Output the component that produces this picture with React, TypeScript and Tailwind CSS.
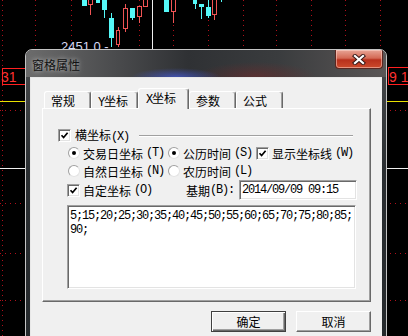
import React from 'react'

const mono = "font-['Liberation_Mono',monospace] tracking-[-1.2px]"

// ASCII runs in a narrow mono face, the rest in the CJK face
const Txt = ({ s }: { s: string }) => (
  <>
    {s
      .split(/([\x20-\x7e]+)/)
      .filter(Boolean)
      .map((p, i) =>
        /^[\x20-\x7e]+$/.test(p) ? (
          <span key={i} className={mono}>
            {p}
          </span>
        ) : (
          <span key={i}>{p}</span>
        )
      )}
  </>
)

const Check = () => (
  <span className="flex h-[13px] w-[13px] shrink-0 items-center justify-center border border-t-[#a0a0a0] border-l-[#a0a0a0] border-b-white border-r-white bg-white shadow-[inset_1px_1px_0_#696969,inset_-1px_-1px_0_#e3e3e3]">
    <svg width="9" height="9" viewBox="0 0 9 9">
      <path d="M1.5 4.2 L3.6 6.5 L7.6 1.8" fill="none" stroke="#000" strokeWidth="1.7" />
    </svg>
  </span>
)

const Radio = ({ on }: { on?: boolean }) => (
  <span className="flex h-[12px] w-[12px] shrink-0 items-center justify-center rounded-full border border-t-[#a0a0a0] border-l-[#a0a0a0] border-b-[#e3e3e3] border-r-[#e3e3e3] bg-white">
    {on && <span className="h-[4px] w-[4px] rounded-full bg-black" />}
  </span>
)

const candles = [
  { x: 82, w: 5, y: -1, h: 7, c: 'g' },
  { x: 88, w: 5, y: -1, h: 6, c: 'r', wt: 5, wb: 15 },
  { x: 96, w: 4, y: -1, h: 4, c: 'g' },
  { x: 102, w: 5, y: -1, h: 11, c: 'g', wt: 0, wb: 18 },
  { x: 109, w: 5, y: 18, h: 20, c: 'g', wt: 13, wb: 47 },
  { x: 116, w: 4, y: 30, h: 15, c: 'r', wt: 27, wb: 47 },
  { x: 123, w: 5, y: 8, h: 21, c: 'r', wt: 4, wb: 32 },
  { x: 130, w: 5, y: 8, h: 10, c: 'g', wt: 8, wb: 20 },
  { x: 137, w: 5, y: 6, h: 11, c: 'r', wt: 6, wb: 23 },
  { x: 143, w: 5, y: -1, h: 8, c: 'r' },
  { x: 164, w: 5, y: -1, h: 13, c: 'g' },
  { x: 171, w: 5, y: -1, h: 13, c: 'r', wt: 0, wb: 23 },
  { x: 193, w: 4, y: -1, h: 5, c: 'g', wt: 0, wb: 9 },
  { x: 199, w: 5, y: 4, h: 3, c: 'g', wt: 4, wb: 19 },
  { x: 206, w: 5, y: 7, h: 9, c: 'g', wt: 0, wb: 18 },
  { x: 212, w: 5, y: -1, h: 16, c: 'r', wt: 0, wb: 20 },
]

const Chart = () => (
  <svg className="absolute inset-0" width="408" height="336" viewBox="0 0 408 336">
    {[2, 35, 71, 139, 173, 208, 243, 276, 311, 345, 380].map((x) => (
      <line key={x} x1={x + 0.5} y1="0" x2={x + 0.5} y2="336" stroke="#b0101a" strokeDasharray="1 4" />
    ))}
    {[110, 203, 253, 300].map((y) => (
      <line key={y} x1="0" y1={y + 0.5} x2="408" y2={y + 0.5} stroke="#b0101a" strokeDasharray="1 4" />
    ))}
    <line x1="0" y1="101.5" x2="408" y2="101.5" stroke="#e8e000" />
    <line x1="0" y1="168.5" x2="408" y2="168.5" stroke="#f0f0f0" />
    <line x1="152.5" y1="0" x2="152.5" y2="49" stroke="#f0f0f0" />
    <rect x="2.5" y="68.5" width="30" height="16" fill="#000" stroke="#ff2020" />
    <text x="-3" y="82" fill="#ff3030" fontSize="14" fontFamily="Liberation Sans">
      .31
    </text>
    <rect x="388.5" y="67.5" width="40" height="17" fill="#000" stroke="#ff2020" />
    <text x="389" y="82" fill="#ff3030" fontSize="14" fontFamily="Liberation Sans">
      9 10
    </text>
    {candles.map((k, i) => {
      const cx = k.x + Math.floor(k.w / 2) + 0.5
      const col = k.c === 'g' ? '#55f8f8' : '#f05454'
      return (
        <g key={i}>
          {k.wt !== undefined && <line x1={cx} y1={k.wt} x2={cx} y2={k.wb} stroke={col} />}
          {k.c === 'g' ? (
            <rect x={k.x} y={k.y} width={k.w} height={k.h} fill={col} />
          ) : (
            <rect x={k.x + 0.5} y={k.y + 0.5} width={k.w - 1} height={k.h - 1} fill="#000" stroke={col} />
          )}
        </g>
      )
    })}
    <rect x="221" y="0" width="1" height="2" fill="#55f8f8" />
    <text x="61" y="51" fill="#d6d8f4" fontSize="13" fontFamily="Liberation Sans">
      2451.0 -
    </text>
  </svg>
)

const tabs = [
  { t: '常规', w: 'w-[47px]' },
  { t: 'Y坐标', w: 'w-[47px]' },
  { t: 'X坐标', w: 'w-[51px]', on: true },
  { t: '参数', w: 'w-[47px]' },
  { t: '公式', w: 'w-[47px]' },
]

export default function App() {
  return (
    <div className="relative h-[336px] w-[408px] overflow-hidden bg-black font-['Noto_Sans_CJK_SC',sans-serif] text-[12px] leading-[13px] text-black">
      <Chart />

      <div className="absolute left-[25px] top-[49px] flex h-[300px] w-[362px] flex-col overflow-hidden rounded-t-[7px] border border-[#c4c4c4] bg-[linear-gradient(180deg,#4a4c4e,#2a2e31_40%,#25292c)] px-[4px]">
        {/* title bar */}
        <div className="-mx-[4px] flex h-[27px] shrink-0 items-start justify-between bg-[radial-gradient(ellipse_45px_9px_at_150px_27px,rgba(70,90,210,0.75),transparent),radial-gradient(ellipse_60px_14px_at_230px_26px,rgba(120,40,40,0.5),transparent),linear-gradient(90deg,#6c6c6c,#4a4b4d_25%,#2f3134_45%,#3a3c3e_70%,#5a5656_100%)]">
          <span className="ml-[6px] mt-[8px] text-[12px] leading-[13px] text-[#111] [text-shadow:0_0_5px_rgba(255,255,255,0.7)]">
            窗格属性
          </span>
          <span className="mr-[3px] flex h-[19px] w-[48px] items-center justify-center rounded-b-[4px] border border-t-0 border-[#5a2620] bg-[linear-gradient(180deg,#e8a596,#d46a55_45%,#b8301c_55%,#cc4a2c)] shadow-[inset_0_0_0_1px_rgba(255,220,210,0.5)]">
            <svg width="14" height="11" viewBox="0 0 14 11">
              <path d="M3 2 L11 9 M11 2 L3 9" stroke="#3a1a18" strokeWidth="4.2" strokeLinecap="square" />
              <path d="M3 2 L11 9 M11 2 L3 9" stroke="#fff" strokeWidth="2.2" strokeLinecap="square" />
            </svg>
          </span>
        </div>

        {/* client area */}
        <div className="flex flex-1 flex-col border-l border-t border-[#e8e8e8] bg-[#f0f0f0]">
          <div className="ml-[13px] mt-[10px] flex h-[20px] items-end">
            {tabs.map((tb) =>
              tb.on ? (
                <div
                  key={tb.t}
                  className={`relative z-10 -mb-px h-[21px] ${tb.w} rounded-t-[3px] border-l border-t border-r border-l-white border-t-white border-r-[#696969] bg-[#f0f0f0] pl-[7px] pt-[2px] shadow-[inset_-1px_0_0_#a0a0a0]`}
                >
                  <Txt s={tb.t} />
                </div>
              ) : (
                <div
                  key={tb.t}
                  className={`h-[17px] ${tb.w} rounded-t-[3px] border-l border-t border-r border-l-white border-t-white border-r-[#696969] pl-[6px] pt-[2px] shadow-[inset_-1px_0_0_#a0a0a0]`}
                >
                  <Txt s={tb.t} />
                </div>
              )
            )}
          </div>

          <div className="mx-[11px] flex h-[194px] flex-col border border-b-[#696969] border-l-white border-r-[#696969] border-t-white shadow-[inset_-1px_-1px_0_#a0a0a0]">
            <div className="mt-[20px] flex h-[13px] items-center pl-[15px] pr-[17px]">
              <Check />
              <span className="ml-[4px]">
                <Txt s="横坐标(X)" />
              </span>
              <span className="ml-[10px] h-[2px] flex-1 border-b border-t border-b-white border-t-[#a0a0a0]" />
            </div>

            <div className="mt-[2px] flex h-[18px] items-center pl-[25px]">
              <div className="flex w-[100px] items-center gap-[3px]">
                <Radio on />
                <Txt s="交易日坐标(T)" />
              </div>
              <div className="flex w-[88px] items-center gap-[3px]">
                <Radio on />
                <Txt s="公历时间(S)" />
              </div>
              <div className="flex items-center gap-[3px]">
                <Check />
                <Txt s="显示坐标线(W)" />
              </div>
            </div>

            <div className="flex h-[18px] items-center pl-[25px]">
              <div className="flex w-[100px] items-center gap-[3px]">
                <Radio />
                <Txt s="自然日坐标(N)" />
              </div>
              <div className="flex items-center gap-[3px]">
                <Radio />
                <Txt s="农历时间(L)" />
              </div>
            </div>

            <div className="flex h-[20px] items-center pl-[24px]">
              <div className="flex w-[119px] items-center gap-[3px]">
                <Check />
                <Txt s="自定坐标(O)" />
              </div>
              <Txt s="基期(B):" />
              <div className="ml-[5px] flex h-[20px] w-[118px] items-center border border-b-white border-l-[#a0a0a0] border-r-white border-t-[#a0a0a0] bg-white pl-[2px] shadow-[inset_1px_1px_0_#696969,inset_-1px_-1px_0_#e3e3e3]">
                <Txt s="2014/09/09 09:15" />
              </div>
            </div>

            <div className="ml-[24px] mt-[5px] h-[84px] w-[289px] border border-b-white border-l-[#a0a0a0] border-r-white border-t-[#a0a0a0] bg-white pl-[2px] pt-[2px] leading-[12px] shadow-[inset_1px_1px_0_#696969,inset_-1px_-1px_0_#e3e3e3]">
              <div>
                <Txt s="5;15;20;25;30;35;40;45;50;55;60;65;70;75;80;85;" />
              </div>
              <div>
                <Txt s="90;" />
              </div>
            </div>
          </div>

          <div className="mr-[11px] mt-[9px] flex justify-end gap-[10px]">
            <button className="flex h-[21px] w-[75px] items-center justify-center border border-[#404040] bg-[#f0f0f0] shadow-[inset_1px_1px_0_#fff,inset_-1px_-1px_0_#696969,inset_-2px_-2px_0_#a0a0a0]">
              确定
            </button>
            <button className="flex h-[21px] w-[75px] items-center justify-center border border-b-[#696969] border-l-white border-r-[#696969] border-t-white bg-[#f0f0f0] shadow-[inset_-1px_-1px_0_#a0a0a0]">
              取消
            </button>
          </div>
        </div>
      </div>
    </div>
  )
}
